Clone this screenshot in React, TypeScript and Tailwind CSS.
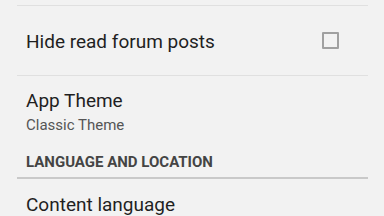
export default function App() {
  return (
    <div
      className="w-[384px] h-[216px] overflow-hidden bg-[#f2f2f2]"
      style={{ fontFamily: "Roboto, 'Noto Sans', sans-serif" }}
    >
      <div className="pl-[17px] pr-[16px]">
        <div className="mt-[5px] h-px bg-[#e0e0e0]" />
        <div className="h-[69px] flex items-center justify-between pl-[9px] pr-[29px]">
          <span className="text-[19px] leading-[22px] text-[#1f1f1f] pt-[2px]">Hide read forum posts</span>
          <span className="w-[17px] h-[17px] border-2 border-[#a0a0a0] rounded-[1px]" />
        </div>
        <div className="h-px bg-[#e0e0e0]" />
        <div className="pl-[9px] pt-[14px]">
          <div className="text-[19px] leading-[22px] text-[#1f1f1f]">App Theme</div>
          <div className="mt-[4px] text-[15px] leading-[18px] text-[#555555]">Classic Theme</div>
          <div className="mt-[19px] text-[15px] leading-[18px] font-bold text-[#444444]">LANGUAGE AND LOCATION</div>
        </div>
        <div className="mt-[6px] h-[2px] bg-[#c9c9c9]" />
        <div className="pl-[9px] pt-[15px] text-[19px] leading-[22px] text-[#1f1f1f]">Content language</div>
      </div>
    </div>
  );
}
